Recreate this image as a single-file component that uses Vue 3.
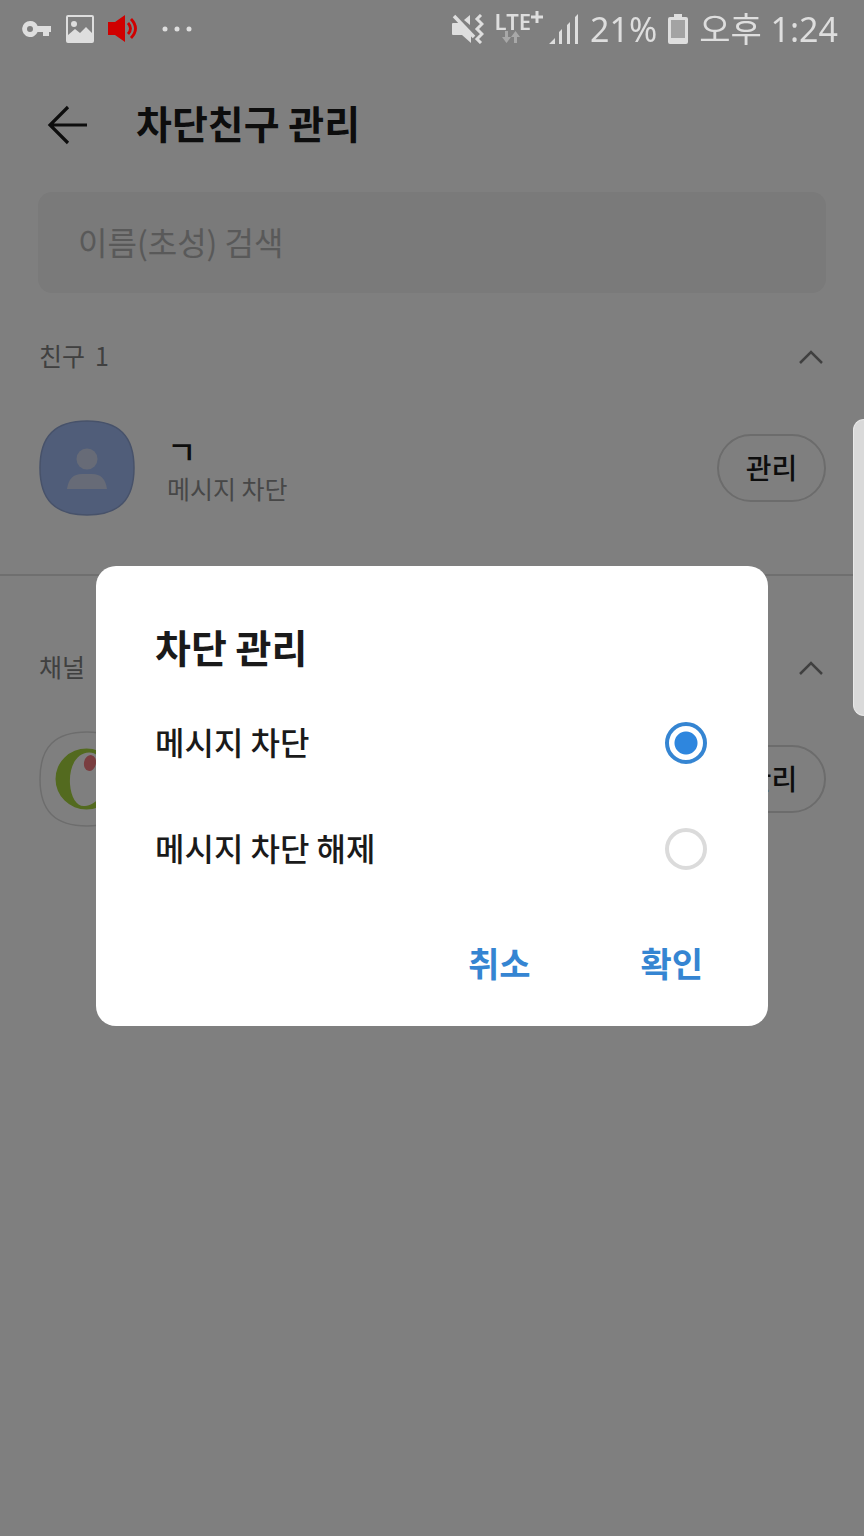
<script setup>
import { ref } from 'vue'

const query = ref('')
const choice = ref('block')
const options = [
  { value: 'block', label: '메시지 차단' },
  { value: 'unblock', label: '메시지 차단 해제' },
]
const friendsOpen = ref(true)
const channelsOpen = ref(true)
</script>

<template>
  <div class="screen">
    <div class="status">
      <div class="status-left">
        <svg class="icon-key" width="30" height="18" viewBox="0 0 30 18" aria-hidden="true">
          <path fill="currentColor" fill-rule="evenodd" d="M8 1a8 8 0 0 1 7.6 5H29v6h-2v4h-6v-4h-5.4A8 8 0 1 1 8 1Zm0 5a3 3 0 1 0 0 6 3 3 0 0 0 0-6Z" />
        </svg>
        <svg class="icon-picture" width="28" height="28" viewBox="0 0 28 28" aria-hidden="true">
          <path fill="currentColor" fill-rule="evenodd" d="M2 0h24a2 2 0 0 1 2 2v24a2 2 0 0 1-2 2H2a2 2 0 0 1-2-2V2a2 2 0 0 1 2-2Zm0 2v18l7-6 5 4 6-6 6 6V2Z" />
          <circle cx="8" cy="9" r="3" fill="currentColor" />
        </svg>
        <svg class="icon-sound" width="30" height="28" viewBox="0 0 30 28" aria-hidden="true">
          <path fill="currentColor" d="M0 7h7l10-7v27L7 20H0Z" />
          <path fill="none" stroke="currentColor" stroke-width="2.8" d="M20 8q5 5.500 0 11M23 4q9 9.500 0 19" />
        </svg>
        <svg class="icon-more" width="30" height="6" viewBox="0 0 30 6" aria-hidden="true">
          <g fill="currentColor"><circle cx="3" cy="3" r="2.500" /><circle cx="15" cy="3" r="2.500" /><circle cx="27" cy="3" r="2.500" /></g>
        </svg>
      </div>
      <div class="status-right">
        <svg width="32" height="30" viewBox="0 0 32 30" aria-hidden="true">
          <path fill="currentColor" d="M1 9h7L19 20v9l-9-8H1q-1 0-1-1V10q0-1 1-1Z" />
          <path fill="currentColor" d="M18 1v10l-6-5Z" />
          <path fill="none" stroke="currentColor" stroke-width="3.500" d="M2 2l20 21" />
          <path fill="none" stroke="currentColor" stroke-width="3" d="M29 1l-4 4 5 5-5 5 5 5-5 5 4 4" />
        </svg>
        <span class="lte">
          <span class="lte-name">LTE<svg class="lte-plus" width="12" height="12" viewBox="0 0 12 12" aria-hidden="true"><path fill="none" stroke="currentColor" stroke-width="3" d="M6 0v12M0 6h12" /></svg></span>
          <svg class="lte-arrows" width="18" height="12" viewBox="0 0 18 12" aria-hidden="true">
            <path fill="currentColor" d="M3 0h3v6h3l-4.500 6L0 6h3ZM12 12h3V6h3l-4.500-6L9 6h3Z" />
          </svg>
        </span>
        <svg class="icon-signal" width="30" height="30" viewBox="0 0 30 30" aria-hidden="true">
          <path fill="currentColor" d="M0 30l6-6v6ZM10 18l3-3v15h-3ZM18 11l3-3v22h-3ZM26 3l3-3v30h-3Z" />
        </svg>
        <span>21%</span>
        <svg width="20" height="30" viewBox="0 0 20 30" aria-hidden="true">
          <path fill="currentColor" d="M6 0h8v3h4q2 0 2 2v23q0 2-2 2H2q-2 0-2-2V5q0-2 2-2h4Z" />
          <path fill="#a3a3a3" d="M3 6h14v18H3Z" />
        </svg>
        <time>오후 1:24</time>
      </div>
    </div>

    <main class="page">
      <header class="topbar">
        <button class="back" type="button" aria-label="뒤로">
          <svg width="40" height="40" viewBox="0 0 40 40" aria-hidden="true">
            <path fill="none" stroke="currentColor" stroke-width="3.200" d="M21 2L3 20l18 18M3 20h37" />
          </svg>
        </button>
        <h1>차단친구 관리</h1>
      </header>

      <div class="search">
        <input v-model="query" type="text" placeholder="이름(초성) 검색" aria-label="이름(초성) 검색" />
      </div>

      <section class="group">
        <div class="group-head">
          <h2>친구<span class="count">1</span></h2>
          <button class="fold" type="button" aria-label="친구 접기" :aria-expanded="friendsOpen" @click="friendsOpen = !friendsOpen">
            <svg width="24" height="14" viewBox="0 0 24 14" aria-hidden="true">
              <path fill="none" stroke="currentColor" stroke-width="2.500" d="M1 13L12 2l11 11" />
            </svg>
          </button>
        </div>
        <div v-if="friendsOpen" class="row">
          <svg class="avatar" width="96" height="96" viewBox="0 0 96 96" aria-hidden="true">
            <path fill="#a0baf2" stroke="#8fa4d4" stroke-width="1.500" d="M48 1C80 1 95 16 95 48S80 95 48 95 1 80 1 48 16 1 48 1Z" />
            <g fill="#ced7ee"><circle cx="48" cy="39" r="10.500" /><path d="M28 69q2-15 15-15h10q13 0 15 15Z" /></g>
          </svg>
          <div class="who">
            <strong>ㄱ</strong>
            <span>메시지 차단</span>
          </div>
          <button class="manage" type="button">관리</button>
        </div>
      </section>

      <section class="group">
        <div class="group-head">
          <h2>채널</h2>
          <button class="fold" type="button" aria-label="채널 접기" :aria-expanded="channelsOpen" @click="channelsOpen = !channelsOpen">
            <svg width="24" height="14" viewBox="0 0 24 14" aria-hidden="true">
              <path fill="none" stroke="currentColor" stroke-width="2.500" d="M1 13L12 2l11 11" />
            </svg>
          </button>
        </div>
        <div v-if="channelsOpen" class="row">
          <svg class="avatar" width="96" height="96" viewBox="0 0 96 96" aria-hidden="true">
            <path fill="#fff" stroke="#dadada" stroke-width="1.500" d="M48 1C80 1 95 16 95 48S80 95 48 95 1 80 1 48 16 1 48 1Z" />
            <path fill="#a6d43e" fill-rule="evenodd" d="M47.500 17.500a31 30.500 0 1 1 0 61 31 30.500 0 0 1 0-61ZM50 21.500C37 22 30 36 31 53c1 14 7 23 15 22 11-1 22-13 21-29-1-15-8-25-17-24.500Z" />
            <ellipse cx="51" cy="32" rx="6" ry="8" fill="#f47c80" transform="rotate(12 51 32)" />
          </svg>
          <div class="who"></div>
          <button class="manage" type="button">관리</button>
        </div>
      </section>
    </main>

    <div class="overlay">
      <form class="dialog" role="dialog" aria-labelledby="dialog-title" @submit.prevent>
        <h2 id="dialog-title">차단 관리</h2>
        <label v-for="o in options" :key="o.value" class="option">
          <span>{{ o.label }}</span>
          <input v-model="choice" type="radio" name="choice" :value="o.value" />
        </label>
        <div class="actions">
          <button type="button">취소</button>
          <button type="submit">확인</button>
        </div>
      </form>
    </div>
    <div class="edge-handle"></div>
  </div>
</template>

<style>
body {
  margin: 0;
  background: #fff;
}
</style>

<style scoped>
* {
  box-sizing: border-box;
}
.screen {
  min-height: 100vh;
  background: #fff;
  color: #1a1a1a;
  font-family: "Noto Sans CJK KR", sans-serif;
}
button {
  border: 0;
  padding: 0;
  background: none;
  color: inherit;
  font: inherit;
  cursor: pointer;
}
svg {
  display: block;
  flex: none;
}
h1,
h2 {
  margin: 0;
}
.status {
  position: relative;
  z-index: 2;
  display: flex;
  justify-content: space-between;
  align-items: center;
  height: 58px;
  padding: 0 26px 0 22px;
  color: #dedede;
}
.status-left,
.status-right {
  display: flex;
  align-items: center;
}
.status-left {
  gap: 14px;
}
.icon-sound {
  color: #d00000;
}
.icon-more {
  margin-left: 10px;
}
.status-right {
  gap: 11px;
  font-family: "Noto Sans", "Noto Sans CJK KR", sans-serif;
  font-size: 34px;
  line-height: 58px;
  white-space: nowrap;
}
.lte {
  display: flex;
  flex-direction: column;
  padding-bottom: 4px;
}
.lte-name {
  display: flex;
  font-size: 22px;
  font-weight: 600;
  line-height: 20px;
}
.lte-arrows {
  margin-left: 7px;
  color: #a8a8a8;
}
.icon-signal {
  margin-left: -5px;
}
.topbar {
  display: flex;
  align-items: center;
  gap: 49px;
  height: 134px;
  padding: 0 47px;
}
.topbar h1 {
  padding-bottom: 6px;
  font-size: 39px;
  font-weight: 700;
  line-height: 48px;
}
.search {
  padding: 0 38px;
}
.search input {
  display: block;
  width: 100%;
  height: 101px;
  padding: 0 40px 4px;
  border: 0;
  border-radius: 14px;
  outline: 0;
  background: #f4f4f4;
  color: inherit;
  font: inherit;
  font-size: 32px;
}
.search input::placeholder {
  color: #b2b2b2;
  opacity: 1;
}
.group {
  padding: 40px 38px 58px 39px;
}
.group + .group {
  border-top: 2px solid #dedede;
  padding-top: 68px;
}
.group-head {
  display: flex;
  justify-content: space-between;
  align-items: center;
  height: 48px;
  color: #808080;
}
.group-head h2 {
  padding-bottom: 4px;
  font-size: 25px;
  font-weight: 400;
  line-height: 32px;
}
.count {
  margin-left: 10px;
}
.fold {
  padding: 8px 3px;
}
.row {
  display: flex;
  align-items: center;
  padding-top: 39px;
}
.who {
  display: flex;
  flex: 1;
  flex-direction: column;
  padding-left: 32px;
}
.who strong {
  font-size: 32px;
  font-weight: 500;
  line-height: 40px;
}
.who span {
  color: #8f8f8f;
  font-size: 25px;
  line-height: 36px;
}
.manage {
  width: 109px;
  height: 68px;
  padding-bottom: 2px;
  border: 2px solid #d8d8d8;
  border-radius: 34px;
  font-size: 28px;
  font-weight: 500;
}
.overlay {
  position: fixed;
  inset: 0;
  z-index: 1;
  display: flex;
  align-items: center;
  padding: 56px 96px 0;
  background: rgba(0, 0, 0, 0.5);
}
.dialog {
  flex: 1;
  padding: 56px 61px 34px 59px;
  border-radius: 20px;
  background: #fff;
}
.dialog h2 {
  margin-bottom: 20px;
  font-size: 39px;
  font-weight: 700;
  line-height: 48px;
}
.option {
  display: flex;
  justify-content: space-between;
  align-items: center;
  height: 106px;
  font-size: 32px;
  font-weight: 500;
  cursor: pointer;
}
.option span {
  padding-bottom: 4px;
}
.option input {
  appearance: none;
  width: 42px;
  height: 42px;
  margin: 0;
  border: 4px solid #dbdbdb;
  border-radius: 50%;
  background: #fff;
}
.option input:checked {
  border-color: #3585d2;
  background: radial-gradient(circle, #2e86de 11px, #fff 12px);
}
.actions {
  display: flex;
  justify-content: flex-end;
  gap: 110px;
  margin-top: 30px;
  padding-right: 4px;
}
.actions button {
  height: 60px;
  color: #3585d2;
  font-size: 34px;
  font-weight: 700;
}
.edge-handle {
  position: fixed;
  top: 419px;
  right: 0;
  z-index: 2;
  width: 11px;
  height: 297px;
  border: 1px solid #e8e8e8;
  border-right: 0;
  border-radius: 12px 0 0 12px;
  background: #d9d9d9;
}
</style>
